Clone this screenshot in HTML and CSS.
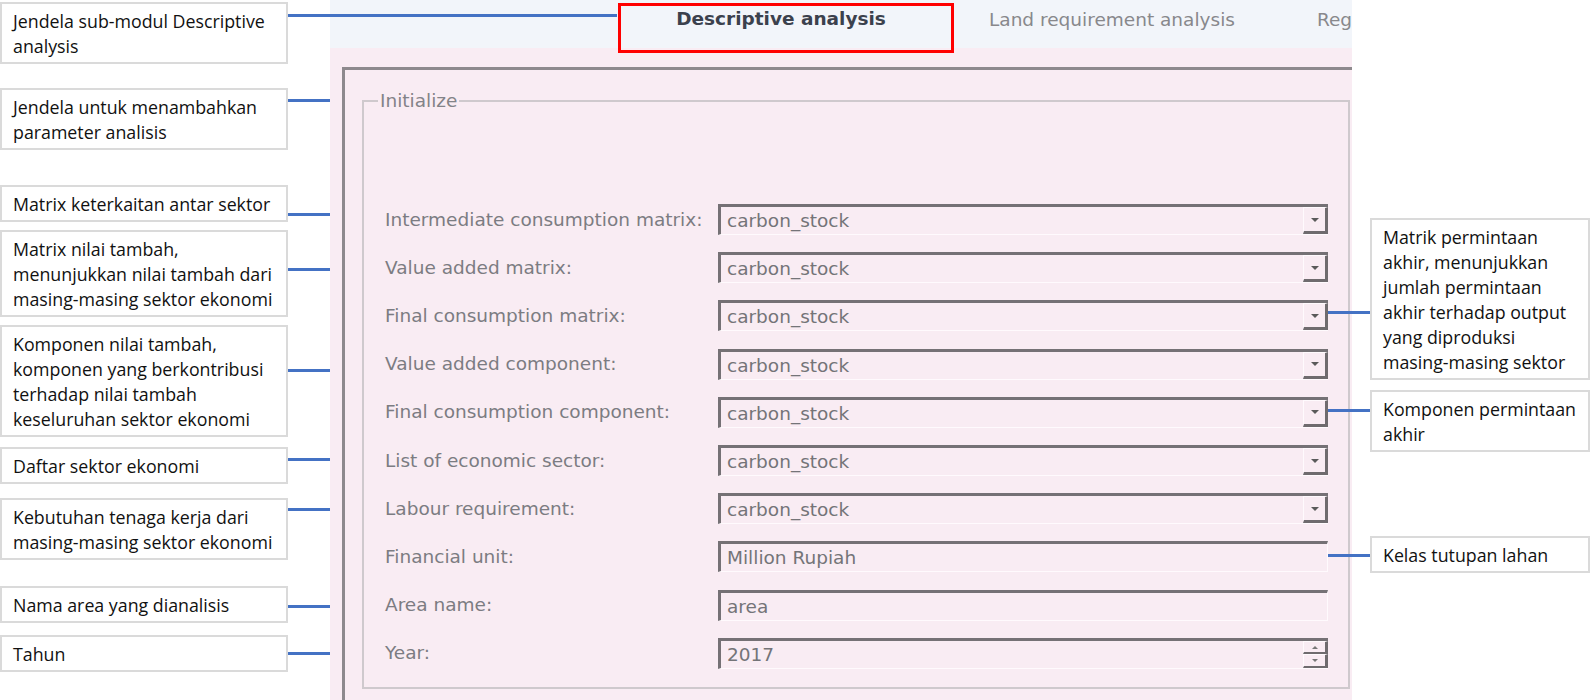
FILE: index.html
```html
<!DOCTYPE html>
<html lang="id">
<head>
<meta charset="utf-8">
<title>Descriptive analysis</title>
<link rel="stylesheet" href="styles.css">
</head>
<body>
<div class="page">
  <aside class="notes notes-left">
    <div class="callout c1"><div class="note">Jendela sub-modul Descriptive<br>analysis</div><span class="wire wire-long"></span></div>
    <div class="callout c2"><div class="note">Jendela untuk menambahkan<br>parameter analisis</div><span class="wire"></span></div>
    <div class="callout c3"><div class="note">Matrix keterkaitan antar sektor</div><span class="wire"></span></div>
    <div class="callout c4"><div class="note">Matrix nilai tambah,<br>menunjukkan nilai tambah dari<br>masing-masing sektor ekonomi</div><span class="wire"></span></div>
    <div class="callout c5"><div class="note">Komponen nilai tambah,<br>komponen yang berkontribusi<br>terhadap nilai tambah<br>keseluruhan sektor ekonomi</div><span class="wire"></span></div>
    <div class="callout c6"><div class="note">Daftar sektor ekonomi</div><span class="wire"></span></div>
    <div class="callout c7"><div class="note">Kebutuhan tenaga kerja dari<br>masing-masing sektor ekonomi</div><span class="wire"></span></div>
    <div class="callout c8"><div class="note">Nama area yang dianalisis</div><span class="wire"></span></div>
    <div class="callout c9"><div class="note">Tahun</div><span class="wire"></span></div>
  </aside>

  <main class="app">
    <nav class="tabbar">
      <div class="tab tab-active">Descriptive analysis</div>
      <div class="tab tab-land">Land requirement analysis</div>
      <div class="tab tab-reg">Regional economic scenario impact</div>
    </nav>
    <section class="content">
      <div class="frame">
        <fieldset class="group">
          <legend class="group-title">Initialize</legend>
          <div class="form">
            <span class="lbl">Intermediate consumption matrix:</span>
            <div class="combo"><span class="val">carbon_stock</span><span class="drop"></span></div>
            <span class="lbl">Value added matrix:</span>
            <div class="combo"><span class="val">carbon_stock</span><span class="drop"></span></div>
            <span class="lbl">Final consumption matrix:</span>
            <div class="combo"><span class="val">carbon_stock</span><span class="drop"></span></div>
            <span class="lbl">Value added component:</span>
            <div class="combo"><span class="val">carbon_stock</span><span class="drop"></span></div>
            <span class="lbl">Final consumption component:</span>
            <div class="combo"><span class="val">carbon_stock</span><span class="drop"></span></div>
            <span class="lbl">List of economic sector:</span>
            <div class="combo"><span class="val">carbon_stock</span><span class="drop"></span></div>
            <span class="lbl">Labour requirement:</span>
            <div class="combo"><span class="val">carbon_stock</span><span class="drop"></span></div>
            <span class="lbl">Financial unit:</span>
            <div class="field"><span class="val">Million Rupiah</span></div>
            <span class="lbl">Area name:</span>
            <div class="field"><span class="val">area</span></div>
            <span class="lbl">Year:</span>
            <div class="combo"><span class="val">2017</span><span class="spin"><span class="step step-up"></span><span class="step step-down"></span></span></div>
          </div>
        </fieldset>
      </div>
    </section>
  </main>

  <aside class="notes notes-right">
    <div class="callout r1"><span class="wire"></span><div class="note">Matrik permintaan<br>akhir, menunjukkan<br>jumlah permintaan<br>akhir terhadap output<br>yang diproduksi<br>masing-masing sektor</div></div>
    <div class="callout r2"><span class="wire"></span><div class="note">Komponen permintaan<br>akhir</div></div>
    <div class="callout r3"><span class="wire"></span><div class="note">Kelas tutupan lahan</div></div>
  </aside>
</div>
</body>
</html>
```

FILE: styles.css
```css
html, body {
  margin: 0;
  padding: 0;
  background: #ffffff;
}

.page {
  display: flex;
  width: 1592px;
  height: 700px;
  overflow: hidden;
  background: #ffffff;
}

/* ---------- callouts ---------- */
.notes { flex: none; }
.notes-left { width: 330px; }
.notes-right { width: 222px; margin-left: 18px; }

.callout {
  display: flex;
  align-items: flex-start;
}

.note {
  box-sizing: border-box;
  border: 2px solid #dadada;
  background: #ffffff;
  padding: 5px 4px 3px 11px;
  font-family: "Open Sans", "Noto Sans", sans-serif;
  font-size: 17.8px;
  line-height: 25px;
  color: #111111;
  white-space: nowrap;
}
.notes-left .note { width: 288px; flex: none; }
.notes-right .note { width: 220px; flex: none; }

.wire {
  flex: none;
  display: block;
  width: 42px;
  height: 3px;
  background: #4472c4;
  position: relative;
  z-index: 3;
}
.wire-long { width: 329px; }
.notes-right .wire { margin-left: -42px; }

.c1 { margin-top: 2px; }
.c2 { margin-top: 24px; }
.c3 { margin-top: 35px; }
.c4 { margin-top: 8px; }
.c5 { margin-top: 8px; }
.c6 { margin-top: 10px; }
.c7 { margin-top: 14px; }
.c8 { margin-top: 26px; }
.c9 { margin-top: 12px; }

.c1 .wire { margin-top: 11.5px; }
.c2 .wire { margin-top: 10.5px; }
.c3 .wire { margin-top: 27.5px; }
.c4 .wire { margin-top: 37.5px; }
.c5 .wire { margin-top: 43.5px; }
.c6 .wire { margin-top: 10.5px; }
.c7 .wire { margin-top: 9.5px; }
.c8 .wire { margin-top: 18.5px; }
.c9 .wire { margin-top: 16.5px; }

.r1 { margin-top: 218px; }
.r2 { margin-top: 10px; }
.r3 { margin-top: 84px; }
.r1 .wire { margin-top: 92.5px; }
.r2 .wire { margin-top: 18.5px; }
.r3 .wire { margin-top: 17.5px; }

/* ---------- application screenshot ---------- */
.app {
  flex: none;
  width: 1022px;
  height: 700px;
  overflow: hidden;
  background: #f9ecf3;
  font-family: "DejaVu Sans", "Liberation Sans", sans-serif;
  color: #7c7c80;
}

.tabbar {
  display: flex;
  align-items: flex-start;
  height: 48px;
  padding-left: 288px;
  background: #f2f5fa;
  white-space: nowrap;
}

.tab {
  flex: none;
  box-sizing: border-box;
}

.tab-active {
  position: relative;
  z-index: 2;
  width: 336px;
  height: 50px;
  margin-top: 3px;
  padding: 2px 10px 0 0;
  border: 3px solid #ff0000;
  text-align: center;
  font-weight: bold;
  font-size: 18.5px;
  line-height: 22px;
  color: #3b414d;
}

.tab-land {
  padding: 9px 82px 0 35px;
  font-size: 18.5px;
  line-height: 22px;
  color: #88888c;
}

.tab-reg {
  padding-top: 9px;
  font-size: 18.5px;
  line-height: 22px;
  color: #88888c;
}

.content {
  padding: 19px 0 0 12px;
}

.frame {
  margin-right: -40px;
  height: 640px;
  border-top: 3px solid #8e898d;
  border-left: 3px solid #8e898d;
  padding: 20px 0 0 17px;
}

.group {
  box-sizing: border-box;
  width: 988px;
  margin: 0;
  min-width: 0;
  padding: 84.5px 20px 9.5px 21px;
  border: 2px solid #cfc9cd;
}

.group-title {
  margin-left: -7px;
  padding: 0 2px;
  font-size: 18.5px;
  line-height: 21px;
  color: #838388;
}

.form {
  display: grid;
  grid-template-columns: 333px 610px;
  grid-auto-rows: 48.2px;
  align-items: center;
  font-size: 18.5px;
  line-height: 22px;
}

.lbl {
  color: #7c7c82;
  white-space: nowrap;
}

.combo,
.field {
  display: flex;
  box-sizing: border-box;
  height: 31px;
  border-top: 3px solid #757175;
  border-left: 3px solid #757175;
  border-bottom: 1px solid #fffafd;
  background: #f9ecf3;
}
.field { border-right: 1px solid #fffafd; }

.val {
  flex: 1;
  padding-left: 6px;
  line-height: 27px;
  color: #747478;
  white-space: nowrap;
}

.drop {
  flex: none;
  width: 25px;
  box-sizing: border-box;
  border-top: 1px solid #fffafd;
  border-left: 1px solid #fffafd;
  border-right: 3px solid #6f6b6e;
  border-bottom: 3px solid #6f6b6e;
  display: flex;
  align-items: center;
  justify-content: center;
}
.drop::after {
  content: "";
  width: 0;
  height: 0;
  border-left: 4px solid transparent;
  border-right: 4px solid transparent;
  border-top: 4px solid #5a5a5a;
}

.spin {
  flex: none;
  width: 25px;
  display: flex;
  flex-direction: column;
}
.step {
  flex: 1;
  box-sizing: border-box;
  border-top: 1px solid #fffafd;
  border-left: 1px solid #fffafd;
  border-right: 3px solid #6f6b6e;
  border-bottom: 2px solid #6f6b6e;
  display: flex;
  align-items: center;
  justify-content: center;
}
.step-up::after {
  content: "";
  border-left: 3px solid transparent;
  border-right: 3px solid transparent;
  border-bottom: 3px solid #777;
}
.step-down::after {
  content: "";
  border-left: 3px solid transparent;
  border-right: 3px solid transparent;
  border-top: 3px solid #777;
}
```
